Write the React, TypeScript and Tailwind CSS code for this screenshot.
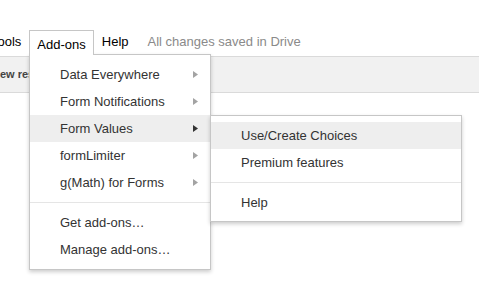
const mainItems = [
  { label: "Data Everywhere", sub: true },
  { label: "Form Notifications", sub: true },
  { label: "Form Values", sub: true, active: true },
  { label: "formLimiter", sub: true },
  { label: "g(Math) for Forms", sub: true },
];

const footerItems = ["Get add-ons\u2026", "Manage add-ons\u2026"];

function Arrow({ dark }: { dark?: boolean }) {
  return (
    <svg width="5" height="7" viewBox="0 0 5 7" className="shrink-0">
      <path d="M0 0 L5 3.5 L0 7 Z" fill={dark ? "#333333" : "#a3a3a3"} />
    </svg>
  );
}

export default function App() {
  return (
    <div className="relative h-[307px] w-[479px] overflow-hidden bg-white font-['Liberation_Sans',Arial,sans-serif] text-[13px]">
      {/* menu bar */}
      <div className="mt-[30px] flex h-[24px] items-center">
        <div className="-ml-[17px] flex h-[24px] items-center border border-transparent px-[7px] text-black">
          Tools
        </div>
        <div className="relative z-20 flex h-[25px] items-start self-start border border-b-0 border-[#c6c6c6] bg-white px-[7px] pt-[4px] text-black">
          Add-ons
        </div>
        <div className="flex h-[24px] items-center border border-transparent px-[7px] text-black">
          Help
        </div>
        <div className="ml-[11px] text-[#8a8a8a]">All changes saved in Drive</div>
      </div>

      {/* toolbar */}
      <div className="mt-[2px] flex h-[37px] items-center border-y border-[#dadada] bg-[#f1f1f1]">
        <span className="-ml-[8px] text-[11px] font-bold text-[#444]">New responses</span>
      </div>

      {/* add-ons dropdown */}
      <div className="absolute left-[29px] top-[54px] z-10 w-[182px] border border-[#c6c6c6] bg-white py-[6px] text-[#333] shadow-[0_2px_4px_rgba(0,0,0,0.2)]">
        {mainItems.map((item) => (
          <div
            key={item.label}
            className={`flex h-[27px] items-center justify-between pl-[30px] pr-[12px] ${item.active ? "bg-[#eeeeee]" : ""}`}
          >
            <span>{item.label}</span>
            {item.sub && <Arrow dark={item.active} />}
          </div>
        ))}
        <div className="my-[6px] h-px bg-[#e5e5e5]" />
        {footerItems.map((label) => (
          <div key={label} className="flex h-[27px] items-center pl-[30px]">
            {label}
          </div>
        ))}
      </div>

      {/* Form Values submenu */}
      <div className="absolute left-[210px] top-[115px] z-30 w-[252px] border border-[#c6c6c6] bg-white pb-[5px] pt-[6px] text-[#333] shadow-[0_2px_4px_rgba(0,0,0,0.2)]">
        <div className="flex h-[27px] items-center bg-[#eeeeee] pl-[30px]">Use/Create Choices</div>
        <div className="flex h-[27px] items-center pl-[30px]">Premium features</div>
        <div className="my-[6px] h-px bg-[#e5e5e5]" />
        <div className="flex h-[27px] items-center pl-[30px]">Help</div>
      </div>
    </div>
  );
}
